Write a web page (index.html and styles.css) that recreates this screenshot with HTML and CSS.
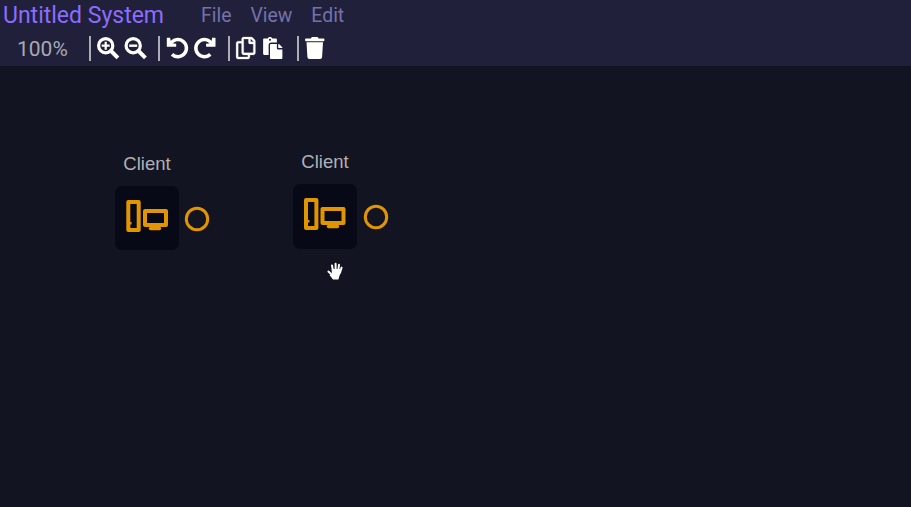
FILE: index.html
```html
<!DOCTYPE html>
<html lang="en">
<head>
<meta charset="utf-8">
<title>Untitled System</title>
<link rel="stylesheet" href="styles.css">
</head>
<body>
<header class="header">
  <div class="menu-row">
    <h1 class="title">Untitled System</h1>
    <nav class="menu"><span>File</span><span>View</span><span>Edit</span></nav>
  </div>
  <div class="toolbar">
    <span class="zoom">100%</span>
    <div class="group">
      <svg class="icon" viewBox="0 0 22 22"><circle cx="8.7" cy="8.7" r="7.1" fill="none" stroke="#fff" stroke-width="3.2"/><path d="M14 14l5.5 5.5" stroke="#fff" stroke-width="4" stroke-linecap="square"/><path d="M4.7 8.7h8M8.7 4.7v8" stroke="#fff" stroke-width="2.2"/></svg>
      <svg class="icon" viewBox="0 0 22 22"><circle cx="8.2" cy="8.7" r="7.1" fill="none" stroke="#fff" stroke-width="3.2"/><path d="M13.5 14l5.5 5.5" stroke="#fff" stroke-width="4" stroke-linecap="square"/><path d="M4.2 8.7h8" stroke="#fff" stroke-width="2.4"/></svg>
    </div>
    <div class="group">
      <svg class="icon" viewBox="0 0 22 22"><use href="#redo" transform="translate(22.3 0) scale(-1 1)"/></svg>
      <svg class="icon" viewBox="0 0 22 22"><g id="redo"><path fill="none" stroke="#fff" stroke-width="3.5" d="M17.5 6.2A8.6 8.6 0 1 0 16.3 17.4"/><path fill="#fff" d="M18.2.8h2.9q.4 0 .4.4v8q0 .6-.6.6h-8.2q-.6 0-.6-.6V6.8l5-.6z"/></g></svg>
    </div>
    <div class="group">
      <svg class="icon copy" viewBox="0 0 448 512"><path fill="#fff" stroke="#fff" stroke-width="6" d="M433.941 65.941l-51.882-51.882A48 48 0 0 0 348.118 0H176c-26.51 0-48 21.49-48 48v48H48c-26.51 0-48 21.49-48 48v320c0 26.51 21.49 48 48 48h224c26.51 0 48-21.49 48-48v-48h80c26.51 0 48-21.49 48-48V99.882a48 48 0 0 0-14.059-33.941zM266 464H54a6 6 0 0 1-6-6V150a6 6 0 0 1 6-6h74v224c0 26.51 21.49 48 48 48h96v42a6 6 0 0 1-6 6zm128-96H182a6 6 0 0 1-6-6V54a6 6 0 0 1 6-6h106v88c0 13.255 10.745 24 24 24h88v202a6 6 0 0 1-6 6zm6-256h-64V48h9.632c1.591 0 3.117.632 4.243 1.757l48.368 48.368a6 6 0 0 1 1.757 4.243V112z"/></svg>
      <svg class="icon paste" viewBox="0 0 448 512"><path fill="#fff" d="M128 184c0-30.879 25.122-56 56-56h136V56c0-13.255-10.745-24-24-24h-80.61C204.306 12.89 183.637 0 160 0s-44.306 12.89-55.39 32H24C10.745 32 0 42.745 0 56v336c0 13.255 10.745 24 24 24h104V184zm32-144c13.255 0 24 10.745 24 24s-10.745 24-24 24-24-10.745-24-24 10.745-24 24-24zm184 248h104v200c0 13.255-10.745 24-24 24H184c-13.255 0-24-10.745-24-24V184c0-13.255 10.745-24 24-24h136v104c0 13.2 10.8 24 24 24zm104-38.059V256h-96v-96h6.059a24 24 0 0 1 16.97 7.029l65.941 65.941a24.002 24.002 0 0 1 7.03 16.971z"/></svg>
    </div>
    <div class="group">
      <svg class="icon trash" viewBox="0 0 448 512"><path fill="#fff" d="M432 32H312l-9.4-18.7A24 24 0 0 0 281.1 0H166.8a23.72 23.72 0 0 0-21.4 13.3L136 32H16A16 16 0 0 0 0 48v32a16 16 0 0 0 16 16h416a16 16 0 0 0 16-16V48a16 16 0 0 0-16-16zM53.2 467a48 48 0 0 0 47.9 45h245.8a48 48 0 0 0 47.9-45L416 122H32z"/></svg>
    </div>
  </div>
</header>
<main class="canvas">
  <div class="node first">
    <span class="label">Client</span>
    <div class="tile"><svg viewBox="0 0 64 64"><g fill="none" stroke="#e19500" stroke-width="4" stroke-linejoin="round"><path d="M13.3 16h10.4v28H13.3zM30 25h21v14H30z"/><path d="M35.5 42.5h9" stroke-width="3.4" stroke-linecap="round"/></g><path d="M14 36h2.5v2.5H14z" fill="#e19500"/></svg></div>
    <svg class="port" viewBox="0 0 26 26"><circle cx="13" cy="13" r="10.7" fill="none" stroke="#e19500" stroke-width="3"/></svg>
  </div>
  <div class="node second">
    <span class="label">Client</span>
    <div class="tile"><svg viewBox="0 0 64 64"><g fill="none" stroke="#e19500" stroke-width="4" stroke-linejoin="round"><path d="M13 16h10.4v28H13zM29.5 25h21v14h-21z"/><path d="M35.5 42.5h9" stroke-width="3.4" stroke-linecap="round"/></g><path d="M14 36h2.5v2.5H14z" fill="#e19500"/></svg></div>
    <svg class="port" viewBox="0 0 26 26"><circle cx="13" cy="13" r="10.7" fill="none" stroke="#e19500" stroke-width="3"/></svg>
  </div>
  <svg class="hand" viewBox="0 0 18 18"><g fill="none" stroke="#fff" stroke-linecap="round" stroke-width="2"><path d="M6 3.4l1 6M9.6 1.8v7M13 2.8l-.8 6M15.6 5.6l-1.6 5M2.4 9.6l3.5 3.2"/></g><path fill="#fff" d="M5.8 7h8.8l.4 3-1.6 4-1 3.5H7L3.5 13l2.3-1z"/></svg>
</main>
</body>
</html>
```
FILE: styles.css
```css
body {
  margin: 0;
  height: 507px;
  display: flex;
  flex-direction: column;
  overflow: hidden;
  background: #131421;
  font-family: Roboto, sans-serif;
}
.header {
  height: 66px;
  background: #20203a;
}
.menu-row {
  display: flex;
  height: 30px;
  line-height: 30px;
}
.title {
  margin: 0;
  padding-left: 3px;
  width: 198px;
  font-size: 23px;
  line-height: 31px;
  font-weight: 400;
  color: #8c6cff;
  white-space: nowrap;
}
.menu {
  display: flex;
  gap: 19px;
  font-size: 19.4px;
  line-height: 31px;
  color: #7472ac;
}
.toolbar {
  display: flex;
  height: 36px;
  align-items: center;
}
.zoom {
  width: 72px;
  padding-left: 17px;
  font-size: 21px;
  line-height: 26px;
  padding-top: 2px;
  color: #a9a9b5;
}
.group {
  box-sizing: border-box;
  display: flex;
  align-items: center;
  gap: 5.5px;
  width: 69.3px;
  height: 25px;
  padding-left: 6px;
  border-left: 2px solid #adadb6;
}
.icon {
  flex: none;
  width: 22px;
  height: 22px;
  overflow: visible;
}
.copy, .paste, .trash {
  width: 19.5px;
}
.paste {
  margin-left: 2px;
}
.canvas {
  position: relative;
  flex: 1;
}
.node {
  position: absolute;
  width: 64px;
}
.first {
  left: 115px;
  top: 86px;
}
.second {
  left: 293px;
  top: 84px;
}
.label {
  display: block;
  height: 34px;
  line-height: 23px;
  text-align: center;
  font-family: "Liberation Sans", sans-serif;
  font-size: 18.5px;
  color: #b0b0b8;
}
.tile {
  height: 64px;
  border-radius: 7px;
  background: #070916;
}
.second .tile {
  height: 65px;
}
.tile svg {
  display: block;
}
.port {
  position: absolute;
  left: 69px;
  top: 53.5px;
  width: 26px;
  height: 26px;
}
.second .port {
  left: 70.3px;
}
.hand {
  position: absolute;
  left: 326px;
  top: 196px;
  width: 18px;
  height: 18px;
}
```
